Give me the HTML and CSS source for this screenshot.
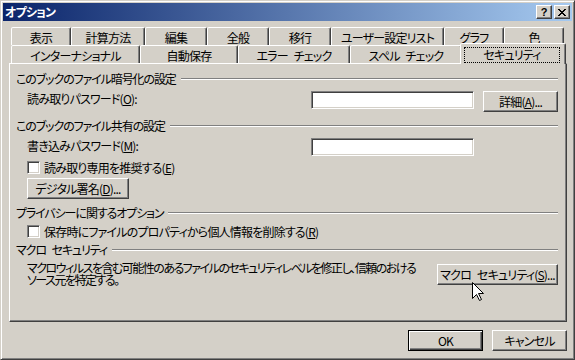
FILE: index.html
```html
<!DOCTYPE html>
<html lang="ja">
<head>
    <meta charset="UTF-8">
    <meta name="viewport" content="width=device-width, initial-scale=1.0">
    <title>オプション</title>
    <link rel="stylesheet" href="styles.css">
</head>
<body>
    <div class="window">
        <div class="titlebar">
            <span class="title">オプション</span>
            <div class="caption-buttons">
                <span class="cap-btn help">?</span>
                <span class="cap-btn">
                    <svg width="8" height="7" viewBox="0 0 8 7" shape-rendering="crispEdges">
                        <path d="M0 0h2v1H0zM6 0h2v1H6zM1 1h2v1H1zM5 1h2v1H5zM2 2h4v1H2zM3 3h2v1H3zM2 4h4v1H2zM1 5h2v1H1zM5 5h2v1H5zM0 6h2v1H0zM6 6h2v1H6z" fill="#000"/>
                    </svg>
                </span>
            </div>
        </div>

        <div class="content">
            <div class="tabs">
                <div class="tab-row back">
                    <div class="tab w60">表示</div>
                    <div class="tab w74">計算方法</div>
                    <div class="tab w62">編集</div>
                    <div class="tab w62">全般</div>
                    <div class="tab w62">移行</div>
                    <div class="tab w113">ユーザー設定リスト</div>
                    <div class="tab w60">グラフ</div>
                    <div class="tab w60">色</div>
                </div>
                <div class="tab-row front">
                    <div class="tab w129">インターナショナル</div>
                    <div class="tab w98">自動保存</div>
                    <div class="tab w112">エラー チェック</div>
                    <div class="tab w112">スペル チェック</div>
                    <div class="tab selected"><span class="focus">セキュリティ</span></div>
                </div>
            </div>

            <div class="panel">
                <div class="group-title">このブックのファイル暗号化の設定</div>
                <div class="field-row">
                    <span class="label indent">読み取りパスワード(<u>O</u>):</span>
                    <span class="textbox"></span>
                    <span class="button">詳細(<u>A</u>)...</span>
                </div>

                <div class="group-title gap7">このブックのファイル共有の設定</div>
                <div class="field-row">
                    <span class="label indent">書き込みパスワード(<u>M</u>):</span>
                    <span class="textbox"></span>
                </div>
                <div class="check indent">
                    <span class="box"></span>
                    <span>読み取り専用を推奨する(<u>E</u>)</span>
                </div>
                <div class="button sign indent">デジタル署名(<u>D</u>)...</div>

                <div class="group-title gap7">プライバシーに関するオプション</div>
                <div class="check indent gap7">
                    <span class="box"></span>
                    <span>保存時にファイルのプロパティから個人情報を削除する(<u>R</u>)</span>
                </div>

                <div class="group-title gap5">マクロ セキュリティ</div>
                <div class="macro-row">
                    <p class="note indent">マクロウィルスを含む可能性のあるファイルのセキュリティレベルを修正し、信頼のおける<br>ソース元を特定する。</p>
                    <span class="button macro">マクロ セキュリティ(<u>S</u>)...</span>
                </div>
            </div>

            <div class="footer">
                <span class="button default">OK</span>
                <span class="button">キャンセル</span>
            </div>
        </div>

        <svg class="cursor" width="13" height="20" viewBox="0 0 13 20">
            <path d="M0.5 0.5L0.5 16.5L4.5 12.5L7.5 18.5L9.5 17.5L6.5 11.5L11.5 11.5Z" fill="#fff" stroke="#000" stroke-width="1" stroke-linejoin="miter"/>
        </svg>
    </div>
</body>
</html>
```

FILE: styles.css
```css
body {
    margin: 0;
    font-family: "Noto Sans CJK JP", sans-serif;
    font-size: 12px;
    font-feature-settings: "palt";
    letter-spacing: -0.8px;
    word-spacing: 4px;
    color: #000;
    background: #d4d0c8;
}

.window {
    position: relative;
    width: 575px;
    height: 360px;
    box-sizing: border-box;
    padding: 2px;
    display: flex;
    flex-direction: column;
    background: #d4d0c8;
    border: 1px solid;
    border-color: #d4d0c8 #404040 #404040 #d4d0c8;
    box-shadow: inset 1px 1px #fff, inset -1px -1px #808080;
}

.titlebar {
    height: 18px;
    display: flex;
    align-items: center;
    padding: 0 2px 0 2px;
    background: linear-gradient(to right, #0a246a, #a6caf0);
    color: #fff;
    font-weight: bold;
}

.title {
    line-height: 18px;
}

.caption-buttons {
    margin-left: auto;
    display: flex;
    gap: 2px;
}

.cap-btn {
    width: 16px;
    height: 14px;
    box-sizing: border-box;
    display: flex;
    align-items: center;
    justify-content: center;
    background: #d4d0c8;
    border: 1px solid;
    border-color: #fff #404040 #404040 #fff;
    box-shadow: inset -1px -1px #808080;
}

.cap-btn.help {
    font-family: "Liberation Sans", sans-serif;
    font-size: 11px;
    font-weight: bold;
    letter-spacing: 0;
    color: #000;
    line-height: 12px;
}

.content {
    flex: 1;
    display: flex;
    flex-direction: column;
    padding: 6px 5px 0 6px;
}

/* tabs */
.tabs {
    height: 36px;
    position: relative;
    z-index: 1;
}

.tab-row {
    display: flex;
    height: 18px;
    margin-left: 2px;
}

.tab {
    box-sizing: border-box;
    height: 18px;
    padding-top: 2px;
    line-height: 16px;
    text-align: center;
    white-space: nowrap;
    background: #d4d0c8;
    border: 1px solid;
    border-bottom: none;
    border-color: #fff #404040 transparent #fff;
    border-radius: 2px 2px 0 0;
    box-shadow: inset -1px 0 #808080;
}

.w60 { width: 60px; }
.w62 { width: 62px; }
.w74 { width: 74px; }
.w98 { width: 98px; }
.w112 { width: 112px; }
.w113 { width: 113px; }
.w129 { width: 129px; }

.tab.selected {
    position: relative;
    z-index: 2;
    width: 106px;
    height: 21px;
    margin: -2px 0 0 -2px;
    padding-top: 0;
}

.focus {
    display: block;
    height: 16px;
    box-sizing: border-box;
    margin: 3px 5px 0 3px;
    border: 1px dotted #000;
    line-height: 14px;
}

/* panel */
.panel {
    width: 558px;
    height: 259px;
    box-sizing: border-box;
    padding: 8px 8px 0 6px;
    border: 1px solid;
    border-color: #fff #404040 #404040 #fff;
    box-shadow: inset -1px -1px #808080;
}

.group-title {
    display: flex;
    align-items: center;
    height: 14px;
    line-height: 14px;
    white-space: nowrap;
    letter-spacing: -1.1px;
}

.group-title::after {
    content: "";
    flex: 1;
    margin-left: 5px;
    border-top: 1px solid #808080;
    border-bottom: 1px solid #fff;
}

.gap5 { margin-top: 5px; }
.gap7 { margin-top: 7px; }

.indent {
    margin-left: 11px;
}

.field-row {
    display: grid;
    grid-template-columns: 1fr 163px 75px;
    column-gap: 9px;
    align-items: start;
    margin-top: 5px;
}

.label {
    line-height: 16px;
    white-space: nowrap;
}

.textbox {
    grid-column: 2;
    height: 18px;
    box-sizing: border-box;
    background: #fff;
    border: 1px solid;
    border-color: #808080 #fff #fff #808080;
    box-shadow: inset 1px 1px #404040, inset -1px -1px #d4d0c8;
}

.button {
    display: flex;
    align-items: center;
    justify-content: center;
    height: 21px;
    box-sizing: border-box;
    white-space: nowrap;
    background: #d4d0c8;
    border: 1px solid;
    border-color: #fff #404040 #404040 #fff;
    box-shadow: inset -1px -1px #808080;
}

.check {
    display: flex;
    align-items: center;
    gap: 4px;
    height: 13px;
    margin-top: 5px;
    white-space: nowrap;
}

.box {
    width: 13px;
    height: 13px;
    box-sizing: border-box;
    background: #fff;
    border: 1px solid;
    border-color: #808080 #fff #fff #808080;
    box-shadow: inset 1px 1px #404040, inset -1px -1px #d4d0c8;
}

.button.sign {
    width: 102px;
    margin-top: 4px;
}

.macro-row {
    display: flex;
    align-items: flex-start;
}

.note {
    flex: 1;
    min-width: 0;
    margin-top: 5px;
    margin-bottom: 0;
    line-height: 12px;
    letter-spacing: -1.5px;
    white-space: nowrap;
}

.button.macro {
    flex: none;
    width: 121px;
    margin-top: 7px;
}

.footer {
    display: flex;
    justify-content: flex-end;
    gap: 9px;
    margin-top: 8px;
}

.footer .button {
    width: 75px;
}

.button.default {
    border-color: #000;
    box-shadow: inset 1px 1px #fff, inset -1px -1px #404040, inset -2px -2px #808080;
}

.cursor {
    position: absolute;
    left: 471px;
    top: 281px;
}
```
